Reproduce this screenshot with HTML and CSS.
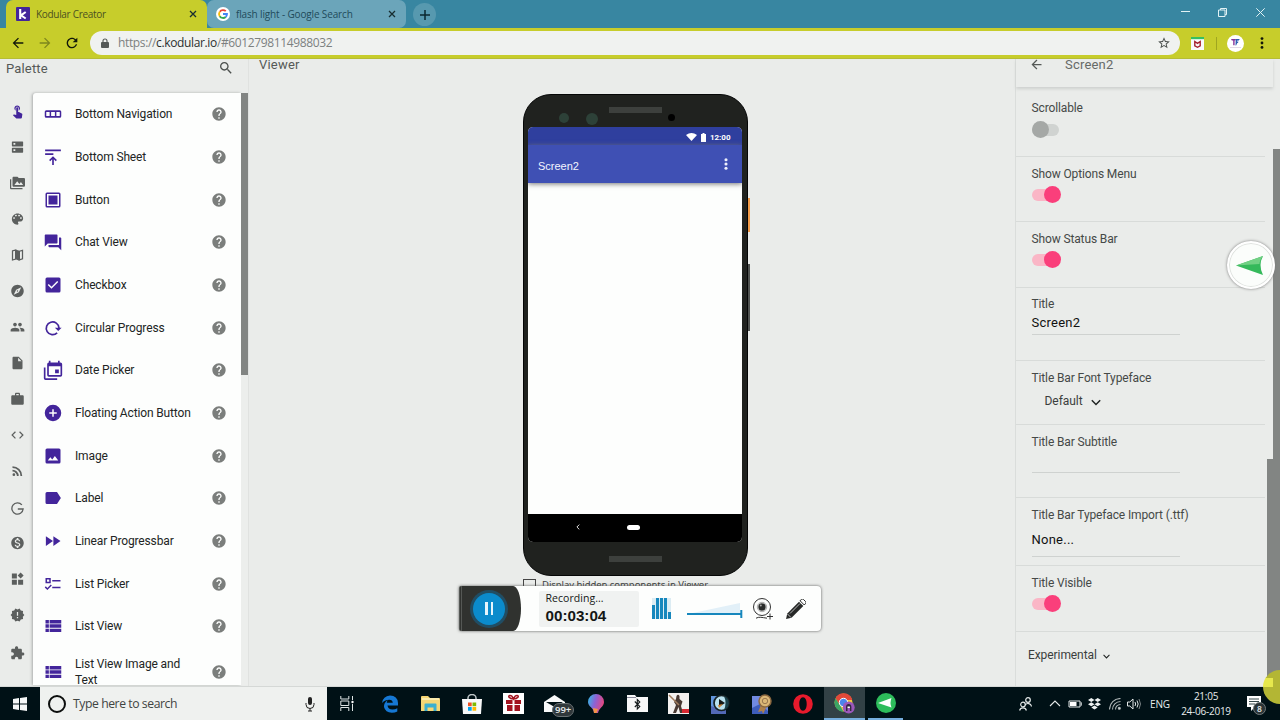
FILE: index.html
```html
<!DOCTYPE html>
<html lang="en">
<head>
<meta charset="utf-8">
<title>Kodular Creator</title>
<link rel="stylesheet" href="styles.css">
</head>
<body>
<svg class="defs" aria-hidden="true">
  <symbol id="help" viewBox="0 0 24 24"><path d="M12 2C6.48 2 2 6.48 2 12s4.48 10 10 10 10-4.48 10-10S17.52 2 12 2zm1 17h-2v-2h2v2zm2.07-7.75l-.9.92C13.45 12.9 13 13.5 13 15h-2v-.5c0-1.1.45-2.1 1.17-2.83l1.24-1.26c.37-.36.59-.86.59-1.41 0-1.1-.9-2-2-2s-2 .9-2 2H8c0-2.21 1.79-4 4-4s4 1.79 4 4c0 .88-.36 1.68-.93 2.25z"/></symbol>
  <symbol id="back" viewBox="0 0 24 24"><path d="M20 11H7.83l5.59-5.59L12 4l-8 8 8 8 1.41-1.41L7.83 13H20v-2z"/></symbol>
  <symbol id="rows" viewBox="0 0 24 24"><path d="M2 4h4.500v4.500H2zM7.500 4H23v4.500H7.500zM2 9.800h4.500v4.500H2zM7.500 9.800H23v4.500H7.500zM2 15.600h4.500v4.500H2zM7.500 15.600H23v4.500H7.500z"/></symbol>
</svg>

<header class="tabs">
  <div class="tab tab-active">
    <svg class="favicon" viewBox="0 0 14 14"><rect width="14" height="14" rx="1" fill="#43259b"/><path d="M4.2 2v10M9.7 5L5 8.3l4.7 3.2" stroke="#fff" stroke-width="2.1" fill="none"/></svg>
    <span class="tab-title kod">Kodular Creator</span>
    <svg class="close" viewBox="0 0 8 8"><path d="M1 1l6 6M7 1L1 7"/></svg>
  </div>
  <div class="tab tab-second">
    <svg class="favicon" viewBox="0 0 14 14"><circle cx="7" cy="7" r="7" fill="#fff"/><g fill="none" stroke-width="1.8"><path d="M3.8 4.7A4 4 0 0 1 9.8 4.2" stroke="#ea4335"/><path d="M3.7 4.8a4 4 0 0 0 0 4.4" stroke="#fbbc05"/><path d="M3.7 9.2a4 4 0 0 0 6 .8" stroke="#34a853"/><path d="M7 7h4a4 4 0 0 1-1.4 3" stroke="#4285f4"/></g></svg>
    <span class="tab-title goo">flash light - Google Search</span>
    <svg class="close" viewBox="0 0 8 8"><path d="M1 1l6 6M7 1L1 7"/></svg>
  </div>
  <div class="newtab"><svg viewBox="0 0 10 10"><path d="M5 0v10M0 5h10"/></svg></div>
  <div class="winbtns">
    <svg width="9" height="9" viewBox="0 0 9 9"><path d="M0 3.5h9"/></svg>
    <svg width="9" height="9" viewBox="0 0 9 9"><path d="M.5 2h6.500v6.500h-6.500zM2.500 2v-1.500h6v6.200h-1.500"/></svg>
    <svg width="9" height="9" viewBox="0 0 9 9"><path d="M.3.3l8.400 8.400M8.700.3L.3 8.700"/></svg>
  </div>
</header>

<div class="toolbar">
  <svg class="nav" viewBox="0 0 24 24"><use href="#back"/></svg>
  <svg class="nav nav-fwd" viewBox="0 0 24 24"><use href="#back"/></svg>
  <svg class="nav" viewBox="0 0 24 24"><path d="M17.650 6.350C16.200 4.900 14.210 4 12 4c-4.420 0-7.990 3.580-7.990 8s3.570 8 7.990 8c3.730 0 6.840-2.550 7.730-6h-2.080c-.82 2.330-3.040 4-5.650 4-3.310 0-6-2.690-6-6s2.690-6 6-6c1.660 0 3.140.69 4.220 1.780L13 11h7V4l-2.350 2.350z"/></svg>
  <div class="address">
    <svg class="lock" viewBox="0 0 8 10"><rect y="4" width="8" height="6" rx="1" fill="#555a58"/><path d="M2 4.500V3a2 2 0 0 1 4 0v1.500" fill="none" stroke="#555a58" stroke-width="1.100"/></svg>
    <span class="url">https://<b>c.kodular.io</b>/#6012798114988032</span>
    <svg class="star" viewBox="0 0 24 24"><path d="M22 9.240l-7.190-.62L12 2 9.190 8.630 2 9.240l5.460 4.730L5.820 21 12 17.270 18.180 21l-1.630-7.030L22 9.240zM12 15.400l-3.760 2.270 1-4.280-3.320-2.880 4.380-.38L12 6.100l1.710 4.040 4.380.38-3.320 2.880 1 4.280L12 15.400z"/></svg>
  </div>
  <svg class="mcafee" viewBox="0 0 13 13"><rect width="13" height="13" fill="#fafafa"/><rect width="13" height="2.200" fill="#35c060"/><path d="M3.800 4.500v4.300L6.500 10.300l2.700-1.500V4.500L6.500 6.300z" fill="none" stroke="#a5202c" stroke-width="1.400"/></svg>
  <i class="sep"></i>
  <svg class="avatar" viewBox="0 0 17 17"><circle cx="8.500" cy="8.500" r="8.500" fill="#fff"/><path d="M4 4h5l-.7 1.500H7.600v4.700H6.200V5.500H4.800z" fill="#87329a"/><path d="M8.700 4h4l-.8 1.500h-1.600v1.200h1.300l-.8 1.300h-.5l-1.200 2.500H8.500z" fill="#2d60b4"/><path d="M3 12.500h11" stroke="#d4c8dc" stroke-width=".7"/></svg>
  <svg class="kebab" viewBox="0 0 4 12"><circle cx="2" cy="1.600" r="1.400"/><circle cx="2" cy="6" r="1.400"/><circle cx="2" cy="10.400" r="1.400"/></svg>
</div>

<main class="workspace">
  <section class="palette">
    <div class="palette-head"><span>Palette</span>
      <svg viewBox="0 0 24 24"><path d="M15.500 14h-.79l-.28-.27C15.410 12.590 16 11.110 16 9.500 16 5.910 13.090 3 9.500 3S3 5.910 3 9.500 5.910 16 9.500 16c1.610 0 3.090-.59 4.230-1.570l.27.28v.79l5 4.990L20.490 19l-4.990-5zm-6 0C7.010 14 5 11.990 5 9.500S7.010 5 9.500 5 14 7.010 14 9.500 11.990 14 9.500 14z"/></svg>
    </div>
    <div class="palette-body">
      <nav class="rail">
        <svg class="on" viewBox="0 0 24 24"><path d="M9 11.240V7.500C9 6.120 10.120 5 11.500 5S14 6.120 14 7.500v3.740c1.210-.81 2-2.180 2-3.740C16 5.010 13.990 3 11.500 3S7 5.010 7 7.500c0 1.560.79 2.930 2 3.740zm9.840 4.630l-4.540-2.260c-.17-.07-.35-.11-.54-.11H13v-6c0-.83-.67-1.500-1.500-1.500S10 6.670 10 7.500v10.740l-3.430-.72c-.08-.01-.15-.03-.24-.03-.31 0-.59.13-.79.33l-.79.8 4.940 4.940c.27.27.65.44 1.060.44h6.790c.75 0 1.330-.55 1.440-1.280l.75-5.270c.01-.07.02-.14.02-.2 0-.62-.38-1.160-.91-1.380z"/></svg>
        <svg viewBox="0 0 24 24"><path fill-rule="evenodd" d="M4 3h16a1 1 0 0 1 1 1v6a1 1 0 0 1-1 1H4a1 1 0 0 1-1-1V4a1 1 0 0 1 1-1zm1.500 2.500v3h3v-3zM4 13h16a1 1 0 0 1 1 1v6a1 1 0 0 1-1 1H4a1 1 0 0 1-1-1v-6a1 1 0 0 1 1-1zm1.500 2.500v3h3v-3z"/></svg>
        <svg viewBox="0 0 24 24"><path d="M2 6H0v14c0 1.100.9 2 2 2h18v-2H2V6zm20-2h-8l-2-2H6c-1.100 0-1.990.9-1.990 2L4 16c0 1.100.9 2 2 2h16c1.100 0 2-.9 2-2V6c0-1.100-.9-2-2-2zM7 15l4.500-6 3.500 4.510 2.500-3.010L21 15H7z"/></svg>
        <svg viewBox="0 0 24 24"><path d="M12 3c-4.970 0-9 4.030-9 9s4.030 9 9 9c.83 0 1.500-.67 1.500-1.500 0-.39-.15-.74-.39-1.010-.23-.26-.38-.61-.38-.99 0-.83.67-1.500 1.500-1.500H16c2.760 0 5-2.240 5-5 0-4.420-4.030-8-9-8zm-5.500 9c-.83 0-1.500-.67-1.500-1.500S5.670 9 6.500 9 8 9.670 8 10.500 7.330 12 6.500 12zm3-4C8.670 8 8 7.330 8 6.500S8.670 5 9.500 5s1.500.67 1.500 1.500S10.330 8 9.500 8zm5 0c-.83 0-1.500-.67-1.500-1.500S13.670 5 14.500 5s1.500.67 1.500 1.500S15.330 8 14.500 8zm3 4c-.83 0-1.500-.67-1.500-1.500S16.670 9 17.500 9s1.500.67 1.500 1.500-.67 1.500-1.500 1.500z"/></svg>
        <svg viewBox="0 0 24 24"><path d="M4 5.500L9 4v14.500L4 20zM15 6l5-1.500V18l-5 1.700z" fill="none" stroke="#5c5f5e" stroke-width="2"/><path d="M9 3l6 2.100V21l-6-2.100z"/></svg>
        <svg viewBox="0 0 24 24"><path d="M12 10.900c-.61 0-1.100.49-1.100 1.100s.49 1.100 1.100 1.100c.61 0 1.100-.49 1.100-1.100s-.49-1.100-1.100-1.100zM12 2C6.480 2 2 6.480 2 12s4.480 10 10 10 10-4.480 10-10S17.520 2 12 2zm2.190 12.190L6 18l3.810-8.190L18 6l-3.810 8.190z"/></svg>
        <svg viewBox="0 0 24 24"><path d="M16 11c1.660 0 2.990-1.340 2.990-3S17.660 5 16 5c-1.660 0-3 1.340-3 3s1.340 3 3 3zm-8 0c1.660 0 2.990-1.340 2.990-3S9.660 5 8 5C6.340 5 5 6.340 5 8s1.340 3 3 3zm0 2c-2.330 0-7 1.170-7 3.500V19h14v-2.500c0-2.330-4.670-3.500-7-3.500zm8 0c-.29 0-.62.02-.97.05 1.160.84 1.970 1.970 1.970 3.450V19h6v-2.500c0-2.330-4.670-3.500-7-3.500z"/></svg>
        <svg viewBox="0 0 24 24"><path d="M6 2c-1.100 0-1.990.9-1.990 2L4 20c0 1.100.89 2 1.990 2H18c1.100 0 2-.9 2-2V8l-6-6H6zm7 7V3.500L18.500 9H13z"/></svg>
        <svg viewBox="0 0 24 24"><path d="M20 6h-4V4c0-1.110-.89-2-2-2h-4c-1.110 0-2 .89-2 2v2H4c-1.110 0-1.990.89-1.990 2L2 19c0 1.110.89 2 2 2h16c1.110 0 2-.89 2-2V8c0-1.110-.89-2-2-2zm-6 0h-4V4h4v2z"/></svg>
        <svg viewBox="0 0 24 24"><path d="M9.400 16.600L4.800 12l4.600-4.600L8 6l-6 6 6 6 1.400-1.400zm5.200 0l4.600-4.600-4.600-4.600L16 6l6 6-6 6-1.400-1.400z"/></svg>
        <svg viewBox="0 0 24 24"><path d="M6.180 15.640a2.180 2.180 0 1 1 0 4.360 2.180 2.180 0 0 1 0-4.360M4 4.440A15.560 15.560 0 0 1 19.560 20h-2.830A12.730 12.730 0 0 0 4 7.270V4.440m0 5.660a9.900 9.900 0 0 1 9.900 9.900h-2.830A7.070 7.070 0 0 0 4 12.930V10.100z"/></svg>
        <svg class="low" viewBox="0 0 24 24"><path d="M19 5.500A9 9 0 1 0 21 12h-8.500" fill="none" stroke="#5c5f5e" stroke-width="2.100"/></svg>
        <svg viewBox="0 0 24 24"><path d="M12 2C6.480 2 2 6.480 2 12s4.480 10 10 10 10-4.480 10-10S17.520 2 12 2zm1.410 16.090V20h-2.670v-1.930c-1.710-.36-3.160-1.460-3.270-3.400h1.960c.1 1.050.82 1.870 2.650 1.870 1.960 0 2.400-.98 2.400-1.590 0-.83-.44-1.610-2.670-2.140-2.480-.6-4.180-1.620-4.180-3.670 0-1.720 1.390-2.840 3.110-3.210V4h2.670v1.950c1.860.45 2.790 1.860 2.850 3.390H14.300c-.05-1.110-.64-1.870-2.220-1.870-1.500 0-2.400.68-2.400 1.640 0 .84.65 1.390 2.670 1.910s4.180 1.390 4.180 3.910c-.01 1.830-1.380 2.830-3.120 3.160z"/></svg>
        <svg viewBox="0 0 24 24"><path d="M13 13v8h8v-8h-8zM3 21h8v-8H3v8zM3 3v8h8V3H3zm14-1.300L12.200 6.500 17 11.300l4.800-4.800z"/></svg>
        <svg viewBox="0 0 24 24"><path d="M23 12l-2.440-2.780.34-3.680-3.610-.82-1.890-3.180L12 3 8.600 1.540 6.710 4.720l-3.610.81.34 3.680L1 12l2.440 2.780-.34 3.690 3.610.82 1.890 3.180L12 21l3.400 1.460 1.890-3.180 3.610-.82-.34-3.680L23 12zm-10 5h-2v-2h2v2zm0-4h-2V7h2v6z"/></svg>
        <svg class="low" viewBox="0 0 24 24"><path d="M20.500 11H19V7c0-1.100-.9-2-2-2h-4V3.500C13 2.120 11.880 1 10.500 1S8 2.120 8 3.500V5H4c-1.100 0-1.990.9-1.990 2v3.800H3.500c1.490 0 2.700 1.210 2.700 2.700s-1.210 2.700-2.700 2.700H2V20c0 1.100.9 2 2 2h3.800v-1.500c0-1.490 1.210-2.700 2.700-2.700 1.490 0 2.700 1.210 2.700 2.700V22H17c1.100 0 2-.9 2-2v-4h1.500c1.380 0 2.500-1.120 2.500-2.500S21.880 11 20.500 11z"/></svg>
      </nav>
      <ul class="components">
        <li><svg viewBox="0 0 24 24"><path fill-rule="evenodd" d="M3 7h18a2 2 0 0 1 2 2v6a2 2 0 0 1-2 2H3a2 2 0 0 1-2-2V9a2 2 0 0 1 2-2zm0 2.300v5.400h4.500V9.300zm6.500 0v5.400h5V9.300zm7 0v5.400H21V9.300z"/></svg><span>Bottom Navigation</span><svg class="help"><use href="#help"/></svg></li>
        <li><svg viewBox="0 0 24 24"><path d="M1.500 2h21v2.300h-21zM1.500 7h11v2.300h-11zM10.900 22.500v-7.500l-2.600 2.600-1.500-1.500 5.200-5.200 5.200 5.200-1.500 1.500-2.600-2.600v7.500z"/></svg><span>Bottom Sheet</span><svg class="help"><use href="#help"/></svg></li>
        <li><svg viewBox="0 0 24 24"><path fill-rule="evenodd" d="M4 2h16a2 2 0 0 1 2 2v16a2 2 0 0 1-2 2H4a2 2 0 0 1-2-2V4a2 2 0 0 1 2-2zm0 2v16h16V4zm2 2h12v12H6z"/></svg><span>Button</span><svg class="help"><use href="#help"/></svg></li>
        <li><svg viewBox="0 0 24 24"><path d="M2 2h15a1 1 0 0 1 1 1v10a1 1 0 0 1-1 1H5l-4 4V3a1 1 0 0 1 1-1zM20 6h2a1 1 0 0 1 1 1v16l-4-4H7a1 1 0 0 1-1-1v-2h14z"/></svg><span>Chat View</span><svg class="help"><use href="#help"/></svg></li>
        <li><svg viewBox="0 0 24 24"><path d="M20 2H4a2 2 0 0 0-2 2v16a2 2 0 0 0 2 2h16a2 2 0 0 0 2-2V4a2 2 0 0 0-2-2zM10 17l-5-5 1.400-1.400L10 14.200l7.600-7.600L19 8z"/></svg><span>Checkbox</span><svg class="help"><use href="#help"/></svg></li>
        <li><svg viewBox="0 0 24 24"><path d="M17.500 18.500A8.500 8.500 0 1 1 20 12" fill="none" stroke="#43259b" stroke-width="2.300"/><path d="M14.500 11.500h9L19 16z"/></svg><span>Circular Progress</span><svg class="help"><use href="#help"/></svg></li>
        <li><svg class="wide" viewBox="0 0 24 24"><path fill-rule="evenodd" d="M7 1h2v2h9V1h2v2h1a2 2 0 0 1 2 2v13a2 2 0 0 1-2 2H7a2 2 0 0 1-2-2V5a2 2 0 0 1 2-2zm0 6.500V18h14V7.500zm7.500 4H19V16h-4.500zM1 9h2v13h14v2H3a2 2 0 0 1-2-2z"/></svg><span>Date Picker</span><svg class="help"><use href="#help"/></svg></li>
        <li><svg viewBox="0 0 24 24"><path d="M12 1a11 11 0 1 0 0 22 11 11 0 0 0 0-22zm5 12h-4v4h-2v-4H7v-2h4V7h2v4h4z"/></svg><span>Floating Action Button</span><svg class="help"><use href="#help"/></svg></li>
        <li><svg viewBox="0 0 24 24"><path d="M22 20V4a2 2 0 0 0-2-2H4a2 2 0 0 0-2 2v16a2 2 0 0 0 2 2h16a2 2 0 0 0 2-2zM5 18l3.500-4.500 2.500 3 3.500-4.500L19 18z"/></svg><span>Image</span><svg class="help"><use href="#help"/></svg></li>
        <li><svg viewBox="0 0 24 24"><path d="M17.800 4.500C17.400 4 16.800 4 16 4H4a2 2 0 0 0-2 2v12a2 2 0 0 0 2 2h12c.8 0 1.400 0 1.800-.7L22.500 12z"/></svg><span>Label</span><svg class="help"><use href="#help"/></svg></li>
        <li><svg viewBox="0 0 24 24"><path d="M2.500 5.500v13L12 12zM12.500 5.500v13L22 12z"/></svg><span>Linear Progressbar</span><svg class="help"><use href="#help"/></svg></li>
        <li><svg viewBox="0 0 24 24"><path fill-rule="evenodd" d="M2 4h7v7H2zm2 2v3h3V6zM11 6.500h11v2H11zM11 15.500h11v2H11zM1 16.500l1.400-1.400L4.500 17.200 9 12.700l1.400 1.400L4.500 20z"/></svg><span>List Picker</span><svg class="help"><use href="#help"/></svg></li>
        <li><svg viewBox="0 0 24 24"><use href="#rows"/></svg><span>List View</span><svg class="help"><use href="#help"/></svg></li>
        <li class="tall"><svg viewBox="0 0 24 24"><use href="#rows"/></svg><span>List View Image and Text</span><svg class="help"><use href="#help"/></svg></li>
      </ul>
      <div class="track"><i></i></div>
    </div>
  </section>

  <section class="viewer">
    <h2>Viewer</h2>
    <div class="phone">
      <i class="cam cam1"></i><i class="cam cam2"></i><i class="speaker"></i><i class="cam cam3"></i>
      <i class="key power"></i><i class="key volume"></i>
      <div class="screen">
        <div class="status">
          <svg width="11" height="8" viewBox="0 0 11 8"><path d="M0 2Q5.500-2 11 2L5.500 8z"/></svg>
          <svg width="5" height="9" viewBox="0 0 5 9"><path d="M1.500 0h2v1H5v8H0V1h1.500z"/></svg>
          <span>12:00</span>
        </div>
        <div class="appbar"><span>Screen2</span><svg viewBox="0 0 4 12"><circle cx="2" cy="1.700" r="1.550"/><circle cx="2" cy="6" r="1.550"/><circle cx="2" cy="10.300" r="1.550"/></svg></div>
        <div class="canvas"></div>
        <div class="androidnav"><svg width="4" height="6" viewBox="0 0 4 6"><path d="M3.300.6L.9 3l2.400 2.400" fill="none" stroke="#ddd" stroke-width="1"/></svg><i></i></div>
      </div>
      <i class="chin"></i>
    </div>
    <label class="hidden-opt"><i></i><span>Display hidden components in Viewer</span></label>
  </section>

  <section class="props">
    <div class="props-head"><svg viewBox="0 0 24 24"><use href="#back"/></svg><span>Screen2</span></div>
    <div class="prop r-scroll"><span class="name">Scrollable</span><i class="switch"></i></div>
    <div class="prop r-options"><span class="name">Show Options Menu</span><i class="switch sw-on"></i></div>
    <div class="prop r-status"><span class="name">Show Status Bar</span><i class="switch sw-on"></i></div>
    <div class="prop r-title"><span class="name">Title</span><span class="field">Screen2</span></div>
    <div class="prop r-font"><span class="name">Title Bar Font Typeface</span><span class="select">Default<svg viewBox="0 0 10 6"><path d="M.8.8L5 5 9.200.8"/></svg></span></div>
    <div class="prop r-sub"><span class="name">Title Bar Subtitle</span><span class="field f-sub"></span></div>
    <div class="prop r-import"><span class="name imp">Title Bar Typeface Import (.ttf)</span><span class="field f-imp">None...</span></div>
    <div class="prop r-visible"><span class="name">Title Visible</span><i class="switch sw-on"></i></div>
    <div class="experimental">Experimental<svg viewBox="0 0 10 6"><path d="M.8.8L5 5 9.200.8"/></svg></div>
  </section>
  <i class="bar bar-outer"></i><i class="bar bar-inner"></i>
</main>

<div class="recorder">
  <div class="rec-left"><div class="pause"><i></i><i></i></div></div>
  <div class="rec-info"><span>Recording...</span><strong>00:03:04</strong></div>
  <svg class="levels" viewBox="0 0 19 21"><path d="M0 0h19v21H0z" fill="#dcecf3"/><path d="M0 7h3v14H0zM4 0h3v21H4zM8 0h3v21H8zM12 0h3v21h-3zM16 14h3v7h-3z" fill="#1687bd"/></svg>
  <svg class="volume-slider" viewBox="0 0 56 16"><path d="M1 12L53 1v11z" fill="#e2f0f8"/><path d="M0 12h54M54.300 8v8" stroke="#1687bd" stroke-width="2" fill="none"/></svg>
  <svg class="webcam" viewBox="0 0 20 22"><g fill="none" stroke="#333"><circle cx="9" cy="9" r="8.500"/><circle cx="9" cy="9" r="4.700" stroke-width=".4"/><path d="M3 20.200c3-1.700 6-.7 11 0M14 18.500h6M17 15.500v6"/></g><circle cx="9" cy="9" r="3.700" fill="#292b2a"/><circle cx="7.800" cy="7.500" r="1" fill="#aaa"/></svg>
  <svg class="pencil" viewBox="0 0 20 20"><path d="M0 20l1.300-5.600L13 2.700 17.300 7 5.600 18.700z" fill="#262827"/><path d="M14 1.700L15.500.5a1.500 1.500 0 0 1 2 0l2 2a1.500 1.500 0 0 1 0 2L18.300 6z" fill="#fff" stroke="#262827"/><path d="M1.500 15l3.500 3.500M4 14.500L14 4.500" stroke="#ddd" stroke-width=".8"/></svg>
</div>

<div class="send"><svg viewBox="0 0 28 19"><path d="M0 9.500L27 0q-5 9 0 19z" fill="#35b95b"/><path d="M0 9.500L27 0q-3.500 4.500-3.500 8z" fill="#72d084"/></svg></div>
<i class="pointer-halo"></i>

<footer class="taskbar">
  <div class="start"><svg viewBox="0 0 14 14"><path d="M0 2l6-.9v5.500H0zM7 1l7-1v6.600H7zM0 7.500h6V13l-6-.9zM7 7.500h7V14l-7-1z" fill="#f4f6f6"/></svg></div>
  <div class="search"><i></i><span>Type here to search</span><svg viewBox="0 0 10 16"><rect x="3" y="1" width="4" height="8" rx="2"/><path d="M1 7v1.500a4 4 0 0 0 8 0V7M5 12.500V15M3 15h4" fill="none" stroke="#222"/></svg></div>
  <div class="apps">
    <div><svg width="15" height="15" viewBox="0 0 15 15" fill="none" stroke="#dfe5e5"><path d="M.8 0v3h8V0M.8 15v-3.500h8V15M.8 5h8v4.500h-8zM12.500 0v4M12.500 8v7"/><circle cx="12.500" cy="6" r="1.200" fill="#fff" stroke="none"/></svg></div>
    <div class="edge"><svg width="18" height="18" viewBox="0 0 18 18"><path d="M1 8Q2 1 9 .5q7.500 0 8 7.500v2.500H6.500q.5 4 5 4 2.700 0 4.800-1.200v3.300q-2.300 1.200-5.500 1.200-6.500-.3-7.800-5.800-.4-4.300 3.800-6.800-1 1.200-1 2.500h6Q11.500 4.800 8.300 4.800 4 4.800 1 8z" fill="#1678d4"/></svg></div>
    <div><svg width="19" height="17" viewBox="0 0 19 17"><path d="M0 2q0-1 1-1h6l2 2h9q1 0 1 1v12H0z" fill="#f6d675"/><path d="M1 4h17" stroke="#fbebac" stroke-width="2"/><path d="M3.500 16V9.500q0-1 1-1h10q1 0 1 1V16h-3v-3.500h-6V16z" fill="#3cafd0"/></svg></div>
    <div><svg width="20" height="20" viewBox="0 0 20 20"><path d="M6 6V4a4 3.500 0 0 1 8 0v2" fill="none" stroke="#bfc7c9" stroke-width="1.500"/><path d="M0 5h20l-1 15H1z" fill="#f8f9f9"/><path d="M6 8.500h3.700v3.700H6z" fill="#f05022"/><path d="M10.500 8.500h3.700v3.700h-3.700z" fill="#7fba00"/><path d="M6 13h3.700v3.700H6z" fill="#00a4ef"/><path d="M10.500 13h3.700v3.700h-3.700z" fill="#ffb900"/></svg></div>
    <div><svg width="21" height="21" viewBox="0 0 21 21"><path fill="#fff" d="M0 0h21v21H0z"/><path d="M3 7h6.500v4H3zM11.500 7H18v4h-6.500zM4 12h5.500v6H4zM11.500 12H17v6h-5.500z" fill="#a31420"/><path d="M10.500 6C6 6 4.500 2.500 7 2.500S10 5 10.500 6c.5-1 1-3.500 3.500-3.500S15 6 10.500 6z" fill="none" stroke="#a31420" stroke-width="1.500"/></svg></div>
    <div class="mail"><svg width="21" height="17" viewBox="0 0 21 17"><path d="M0 7l10.500-7L21 7v10H0z" fill="#f9fafa"/><path d="M2 7h17l-8.500 5z" fill="#001115"/></svg><b>99+</b></div>
    <div><svg width="16" height="19" viewBox="0 0 16 19"><defs><linearGradient id="balloon" x1="0" y1=".2" x2="1" y2=".5"><stop stop-color="#36b7e5"/><stop offset=".45" stop-color="#8b62d5"/><stop offset="1" stop-color="#e9467b"/></linearGradient></defs><path d="M8 0a8 8 0 0 1 8 8c0 4.500-5 6-6 11H6C6 14 0 12.500 0 8a8 8 0 0 1 8-8z" fill="url(#balloon)"/><path d="M5 14l5 1-1.500 4H6z" fill="#f39445"/></svg></div>
    <div><svg width="21" height="17" viewBox="0 0 21 17"><path d="M0 0h8l1.500 2H21v15H0z" fill="#f7f8f8"/><path d="M0 2.500h9" stroke="#889"/><path d="M7.800 6.500l5 5L10.300 14V4.500L12.800 7l-5 5" fill="none" stroke="#101718" stroke-width="1.100"/></svg></div>
    <div><svg width="21" height="21" viewBox="0 0 21 21"><path fill="#f3f1ef" d="M0 0h21v21H0z"/><path d="M8.500 3q1.500-2.500 3 0v3l3 2.500-1.500 4.500 2 7h-3l-1.500-6-2.500 6H5l3-8-2-3 2-3z" fill="#493932"/><path d="M1 2l10 10" stroke="#9f7c5c" stroke-width="1.500"/><path d="M14 16h7v4h-7z" fill="#d92932"/></svg></div>
    <div><svg width="20" height="20" viewBox="0 0 20 20"><path fill="#6095dc" d="M1 2h15v18H1z"/><path d="M1 12l6 2 9-2v8H1z" fill="#5268b6"/><circle cx="11.500" cy="9" r="7.500" fill="#b9e2f0" stroke="#172225" stroke-width="1.700"/><path d="M14 2a7.500 7.500 0 0 1 0 14q3-7 0-14z" fill="#19414b"/><path d="M9 5l6 4-6 4z" fill="#161a1a"/><path d="M8 11l5-1-4 4z" fill="#cf8435"/></svg></div>
    <div><svg width="20" height="20" viewBox="0 0 20 20"><path fill="#718ae0" d="M0 2h16v18H0z"/><path d="M0 14l8-4 8 7v3H0z" fill="#3e5dba"/><path d="M9 11l-3 7 4-1 1 3 3-6z" fill="#ae804c"/><circle cx="13" cy="7" r="6" fill="#dbb777" stroke="#8b6840" stroke-width="1.500"/><circle cx="13" cy="7" r="2.700" fill="none" stroke="#9a784f"/></svg></div>
    <div><svg width="20" height="20" viewBox="0 0 20 20"><path fill-rule="evenodd" d="M10 .2a9.800 9.800 0 1 0 0 19.600A9.800 9.800 0 0 0 10 .2zm0 3.100c2.400 0 3.700 3 3.700 6.700s-1.300 6.700-3.700 6.700S6.300 13.700 6.300 10 7.600 3.300 10 3.300z" fill="#e71a2c"/></svg></div>
    <div class="running current"><svg width="21" height="21" viewBox="0 0 21 21"><circle cx="9.500" cy="9.500" r="9" fill="#f3ca3e"/><path d="M1.500 5.300A9.200 9.200 0 0 1 17.700 5l.5 2h-8.700l-4 5z" fill="#e2483a"/><path d="M1.500 5.300L7 14l2.500 4.700A9.200 9.200 0 0 1 1.500 5.300z" fill="#3ba565"/><circle cx="9.500" cy="9.500" r="4.200" fill="#4c86ec" stroke="#fff"/><circle cx="14.700" cy="14.500" r="6" fill="#9b58bb"/><path d="M12 18v-4q0-3 2.700-3t2.700 3v4h-1.500v-3h-2.400v3z" fill="#332940"/><path d="M13.500 13.500h2.400V15h-2.400z" fill="#fff"/></svg></div>
    <div class="running"><svg width="20" height="20" viewBox="0 0 20 20"><circle cx="10" cy="10" r="10" fill="#2dbc5b"/><path d="M2 10l13.500-5q-2 5 0 9.500z" fill="#fff"/></svg></div>
  </div>
  <div class="tray">
    <svg class="t-people" viewBox="0 0 13 14" fill="none" stroke="#e5eaea" stroke-width="1.200"><circle cx="9" cy="3" r="2.300"/><path d="M6.200 8a3.500 3.500 0 0 1 6.300 1.500"/><circle cx="4" cy="7.500" r="2.300"/><path d="M.6 13.500a3.500 3.500 0 0 1 6.800 0"/></svg>
    <svg class="t-up" viewBox="0 0 12 7" fill="none" stroke="#e5eaea" stroke-width="1.100"><path d="M1 6l5-5 5 5"/></svg>
    <svg class="t-bat" viewBox="0 0 14 8"><path d="M1 1h11v6H1zM12.500 3H14v2h-1.500" fill="none" stroke="#e5eaea"/><path d="M2 2h6.500v4H2z" fill="#fff"/></svg>
    <svg class="t-drop" viewBox="0 0 13 12" fill="#eef2f2"><path d="M3.300 0L6.500 2 3.300 4 0 2zM9.700 0L13 2 9.700 4 6.500 2zM3.300 4.300l3.200 2-3.200 2L0 6.300zM9.700 4.300l3.300 2-3.300 2-3.200-2zM6.500 7.600l3.200 2-3.200 2-3.200-2z"/></svg>
    <svg class="t-wifi" viewBox="0 0 12 12" fill="none" stroke="#adb5b6" stroke-width="1.100"><path d="M.5 11.500A11 11 0 0 1 11.500.5M3.500 11.500a8 8 0 0 1 8-8M6.500 11.500a5 5 0 0 1 5-5"/><circle cx="10.300" cy="10.300" r="1" fill="#fff"/></svg>
    <svg class="t-vol" viewBox="0 0 14 12" fill="none" stroke="#e1e6e6"><path d="M.5 4h2.300L6 1v10L2.800 8H.5zM8 4q1.300 2 0 4M10 2.500q2.300 3.500 0 7"/><path d="M12 1q3 5 0 10" stroke="#7b8486"/></svg>
    <span class="lang">ENG</span>
    <div class="clock"><span>21:05</span><span>24-06-2019</span></div>
    <div class="note"><svg viewBox="0 0 14 15"><path d="M0 0h14v11H8l-4 4v-4H0z" fill="#fff"/><path d="M2 3h10M2 5.500h10M2 8h6" stroke="#35484b"/></svg><b>8</b></div>
  </div>
</footer>
</body>
</html>
```

FILE: styles.css
```css
* { box-sizing: border-box; }
html, body { margin: 0; width: 1280px; height: 720px; overflow: hidden; }
body { position: relative; display: flex; flex-direction: column; background: #eaecea; color: #3b3e3d; font: 12px Roboto, sans-serif; }
svg { display: block; flex: none; }
i { display: block; flex: none; }
.defs { position: absolute; width: 0; height: 0; }

/* browser chrome */
.tabs { display: flex; height: 28px; background: #3886a1; flex: none; }
.tab { display: flex; align-items: center; height: 28px; font: 10px "Open Sans", "Noto Sans", sans-serif; }
.tab-active { width: 201px; margin-left: 6px; padding: 0 10px 0 10px; background: #c7cd2b; border-radius: 7px 7px 0 0; color: #4b5021; }
.tab-second { width: 199px; padding: 0 10px 0 9px; background: #6ba5ba; border-radius: 7px; color: #1f4b5b; }
.favicon { width: 14px; height: 14px; }
.tab-title { flex: 1; margin-left: 6px; white-space: nowrap; }
.kod { letter-spacing: -.31px; }
.goo { letter-spacing: -.15px; }
.close { width: 8px; height: 8px; stroke: #182e31; stroke-width: 1.3; }
.newtab { display: flex; align-items: center; justify-content: center; width: 23px; height: 23px; margin: 3px 0 0 7px; border-radius: 50%; background: #5799af; }
.newtab svg { width: 10px; height: 10px; stroke: #0b2830; stroke-width: 1.5; }
.winbtns { display: flex; gap: 28.500px; margin: 8px 15.500px 0 auto; stroke: #e2f2f5; fill: none; }
.toolbar { display: flex; align-items: center; height: 31px; padding: 0 16px 0 10px; background: #c7cd2b; flex: none; border-bottom: 1px solid #b6bd35; }
.nav { width: 16px; height: 16px; margin-right: 11px; fill: #12180a; }
.nav-fwd { transform: rotate(180deg); fill: #7e861e; }
.address { display: flex; align-items: center; width: 1090px; height: 24px; margin-left: -1px; padding: 0 9px 0 11px; border-radius: 12px; background: #f0f2f0; }
.lock { width: 8px; height: 10px; }
.url { flex: 1; margin-left: 9px; font: 12px "Open Sans", "Noto Sans", sans-serif; letter-spacing: -.36px; color: #7c8180; position: relative; top: -.5px; }
.url b { font-weight: 400; color: #2b302e; }
.star { width: 14px; height: 14px; fill: #4b504e; }
.mcafee { width: 13px; height: 13px; margin-left: 11px; }
.sep { width: 1px; height: 13px; margin: 0 10px 0 12px; background: #9fa620; }
.avatar { width: 17px; height: 17px; }
.kebab { width: 4px; height: 12px; margin-left: auto; fill: #11170a; }

/* palette */
.workspace { position: relative; display: flex; height: 628px; flex: none; overflow: hidden; border-bottom: 1px solid #d5d8d6; }
.palette { width: 249px; border-right: 1px solid #e0e2e0; }
.palette-head { display: flex; justify-content: space-between; align-items: center; height: 34px; padding: 0 14px 16px 6px; font-size: 13px; letter-spacing: .17px; color: #555957; }
.palette-head svg { width: 16px; height: 16px; fill: #4c504e; }
.palette-body { display: flex; height: 592px; }
.rail { width: 33px; padding-left: 1px; }
.rail svg { width: 15px; height: 36px; margin: 0 auto; fill: #5c5f5e; overflow: visible; }
.rail .on { fill: #43259b; }
.rail .low { position: relative; top: 1.500px; }
.components { width: 208px; margin: 0; padding: 0; list-style: none; overflow: hidden; background: #fdfefd; box-shadow: -1px 0 3px #a9acaa; border-radius: 3px 0 0 0; }
.components li { display: flex; align-items: center; height: 42.660px; padding: 0 14px 0 11px; letter-spacing: -.14px; color: #222524; }
.components li.tall { height: 48.500px; line-height: 16px; }
.components li > svg { width: 18px; height: 18px; fill: #43259b; }
.components li > svg.wide { width: 20px; height: 20px; margin: 0 -1px; }
.components span { flex: 1; margin-left: 13px; }
.components .tall span { padding-right: 20px; }
.components li > svg.help { width: 16px; height: 16px; fill: #7b7e7c; }
.track { width: 7px; background: #eceeec; }
.track i { height: 282px; background: #828583; }

/* viewer */
.viewer { width: 766px; }
.viewer h2 { height: 35px; margin: 0; padding: 0 0 0 10px; font-size: 13px; font-weight: 400; line-height: 12px; letter-spacing: .2px; color: #555957; }
.phone { position: relative; width: 225px; height: 482px; margin-left: 274px; padding: 33px 6px 0 5px; border: 1px solid #050606; border-radius: 28px; background: #20221f; }
.cam, .speaker, .key { position: absolute; }
.cam { border-radius: 50%; background: #2d4138; }
.cam1 { left: 35px; top: 18px; width: 10px; height: 10px; }
.cam2 { left: 62px; top: 17.500px; width: 12px; height: 12px; }
.cam3 { left: 144px; top: 19px; width: 7px; height: 7px; background: #000; }
.speaker { left: 85px; top: 12px; width: 53px; height: 6px; background: #3d403d; }
.key { right: -3px; width: 2px; }
.power { top: 103px; height: 34px; background: #f29b48; }
.volume { top: 169px; height: 67px; background: #505351; }
.screen { height: 415px; margin: -1px -.5px 0 -1px; border-radius: 5px; overflow: hidden; background: #fdfefd; display: flex; flex-direction: column; }
.status { display: flex; align-items: center; justify-content: flex-end; gap: 4px; height: 18px; padding: 2px 11px 0 0; background: #2f3f9e; color: #fff; fill: #fff; font-size: 8px; font-weight: 700; }
.appbar { display: flex; align-items: center; justify-content: space-between; height: 38px; padding: 0 13.500px 0 10px; background: #3f50b4; color: #f2f4ff; font: 11px "Liberation Sans", sans-serif; box-shadow: 0 1px 5px #777; z-index: 1; }
.appbar span { padding-top: 3px; }
.appbar svg { width: 4px; height: 12px; fill: #eef0fc; }
.canvas { flex: 1; }
.androidnav { display: flex; align-items: center; gap: 47px; height: 28.500px; padding: 0 0 1px 48px; background: #000; }
.androidnav i { width: 13px; height: 5px; border-radius: 3px; background: #fff; }
.chin { width: 53px; height: 6px; margin: 14px 0 0 80px; background: #3d403d; }
.hidden-opt { display: flex; align-items: center; gap: 7px; margin: 2px 0 0 274px; font: 9.500px "Noto Sans", sans-serif; letter-spacing: -.05px; line-height: 13px; white-space: nowrap; }
.hidden-opt i { width: 13px; height: 12px; margin-right: -1px; border: 1.500px solid #444; }

/* properties */
.props { width: 258px; border-left: 1px solid #dadddb; }
.props-head { display: flex; align-items: flex-start; height: 28px; padding-left: 13px; font-size: 13px; line-height: 12px; letter-spacing: .2px; color: #666a68; box-shadow: 0 2px 3px #cdd0ce; }
.props-head svg { width: 15px; height: 15px; margin: -2px 21px 0 0; fill: #555957; }
.prop { display: flex; flex-direction: column; width: 249px; padding: 9px 0 0 15.500px; border-bottom: 1px solid #d8dbd9; letter-spacing: -.13px; }
.name { line-height: 15px; color: #454947; }
.r-scroll { height: 65px; margin-top: 5px; }
.r-options { height: 65px; }
.r-status { height: 66px; }
.r-title { height: 73px; }
.r-font { height: 64px; }
.r-sub { height: 73px; }
.r-import { height: 68px; }
.r-visible { height: 66px; }
.r-options .name, .r-status .name, .r-font .name, .r-sub .name, .r-import .name, .r-visible .name { padding-top: 1px; line-height: 14px; }
.switch { position: relative; width: 27px; height: 12px; margin-top: 7.500px; border-radius: 6px; background: #d0d3d1; }
.switch::after { content: ""; position: absolute; left: 0; top: -2.500px; width: 17px; height: 17px; border-radius: 50%; background: #a5a8a6; }
.sw-on { background: #fab6c6; }
.sw-on::after { left: 12.500px; background: #fa3f7b; }
.field { width: 148px; height: 23px; border-bottom: 1px solid #cfd2d0; font-size: 13px; line-height: 22px; color: #111; letter-spacing: .25px; }
.f-sub { height: 24px; }
.f-imp { height: 35px; line-height: 35px; }
.select { display: flex; align-items: center; gap: 8px; margin: 1px 0 0 13px; line-height: 30px; letter-spacing: -.05px; }
.select svg { width: 10px; height: 7px; margin-top: 3px; }
.select svg path, .experimental path { fill: none; stroke: #202423; stroke-width: 1.500; }
.experimental { display: flex; align-items: center; gap: 6px; padding: 15px 0 0 12px; line-height: 16px; letter-spacing: -.08px; }
.experimental svg { width: 7px; height: 5px; margin-top: 3px; }
.bar { position: absolute; background: #828583; }
.bar-outer { left: 1273px; top: 90px; width: 7px; height: 538px; }
.bar-inner { left: 1266.500px; top: 400px; width: 7px; height: 228px; }

/* floating recorder and shortcuts */
.recorder { position: absolute; left: 459px; top: 586px; width: 362px; height: 45px; display: flex; align-items: center; border-radius: 2px 4px 4px 2px; background: #fdfefd; box-shadow: 0 0 3px #555; }
.rec-left { display: flex; align-items: center; width: 62px; height: 45px; padding-left: 11px; background: #30322f; border-left: 3px double #555855; border-radius: 2px 8px 8px 2px / 2px 23px 23px 2px; }
.pause { display: flex; align-items: center; justify-content: center; gap: 3px; width: 32px; height: 32px; border-radius: 50%; background: #0b8bcc; box-shadow: 0 0 0 3px #214d63; }
.pause i { width: 2.500px; height: 13px; background: #e6f5fc; }
.rec-info { display: flex; flex-direction: column; width: 100px; height: 36px; margin-left: 18px; padding-left: 6.500px; background: #f0f2f1; border-radius: 2px; color: #151716; font: 10.500px "Open Sans", sans-serif; }
.rec-info span { line-height: 14px; letter-spacing: .05px; }
.rec-info strong { font: 700 15.200px/22px "Liberation Sans", sans-serif; }
.levels { width: 19px; height: 21px; margin-left: 13px; }
.volume-slider { width: 56px; height: 16px; margin: 3px 0 0 16px; }
.webcam { width: 20px; height: 22px; margin: 0 0 0 10px; }
.pencil { width: 20px; height: 20px; margin-left: 13px; }
.send { position: absolute; left: 1227px; top: 241px; width: 48px; height: 48px; display: flex; align-items: center; justify-content: center; border-radius: 50%; background: #fbfdfb; border: 2px solid #fff; box-shadow: 0 0 3px #777, inset 0 0 0 1px #dfe2df; }
.send svg { width: 28px; height: 19px; margin-right: 2px; }
.pointer-halo { position: absolute; z-index: 3; left: 1263px; top: 670px; width: 17px; height: 34px; border-radius: 17px 0 0 17px; background: linear-gradient(#e6e84d, #e6e84d) 0 8px / 10px 9px no-repeat, #b3b634; }

/* taskbar */
.taskbar { display: flex; height: 33px; background: #001116; flex: none; color: #e7ecec; }
.start { display: flex; align-items: center; width: 40px; padding-left: 13px; }
.start svg { width: 14px; height: 14px; }
.search { display: flex; align-items: center; width: 287px; padding: 0 12px 0 8px; background: #eff1ef; color: #3f4442; font: 12px "Open Sans", sans-serif; }
.search i { width: 18px; height: 18px; border: 2.500px solid #0c0e0d; border-radius: 50%; }
.search span { flex: 1; margin-left: 7px; letter-spacing: -.45px; }
.search span { letter-spacing: -.43px; font-size: 12.200px; }
.search svg { width: 10px; height: 16px; fill: #222; }
.apps { display: flex; }
.apps > div { position: relative; display: flex; align-items: center; justify-content: center; width: 41.400px; height: 33px; }
.apps .edge { padding-left: 2px; }
.mail b { position: absolute; left: 18px; top: 15.500px; padding: 0 2px; border: 1px solid #6a7274; border-radius: 7px; background: #30383b; font: 600 9.500px/12px "Open Sans", sans-serif; }
.apps .running { border-bottom: 2px solid #76aede; padding-top: 1px; }
.apps .current { background: #324146; padding-left: 1px; }
.apps .running:last-child { width: 35px; margin-left: 3px; }
.tray { display: flex; align-items: center; flex: 1; margin-left: 116px; font: 10px "Open Sans", sans-serif; }
.t-people { width: 13px; height: 14px; }
.t-up { width: 12px; height: 7px; margin-left: 17px; }
.t-bat { width: 14px; height: 8px; margin-left: 7px; }
.t-drop { width: 13px; height: 12px; margin-left: 6px; }
.t-wifi { width: 12px; height: 12px; margin-left: 8px; }
.t-vol { width: 14px; height: 12px; margin-left: 6px; }
.lang { margin-left: 9px; letter-spacing: -.15px; }
.clock { display: flex; flex-direction: column; align-items: center; width: 52px; margin-left: 10px; line-height: 15px; letter-spacing: -.25px; white-space: nowrap; }
.note { position: relative; margin-left: 15px; }
.note svg { width: 14px; height: 15px; }
.note b { position: absolute; left: 6px; top: 6px; width: 13px; height: 13px; border: 1px solid #727a7c; border-radius: 50%; background: #2b3437; text-align: center; font: 600 8.500px/11px "Open Sans", sans-serif; }
```
